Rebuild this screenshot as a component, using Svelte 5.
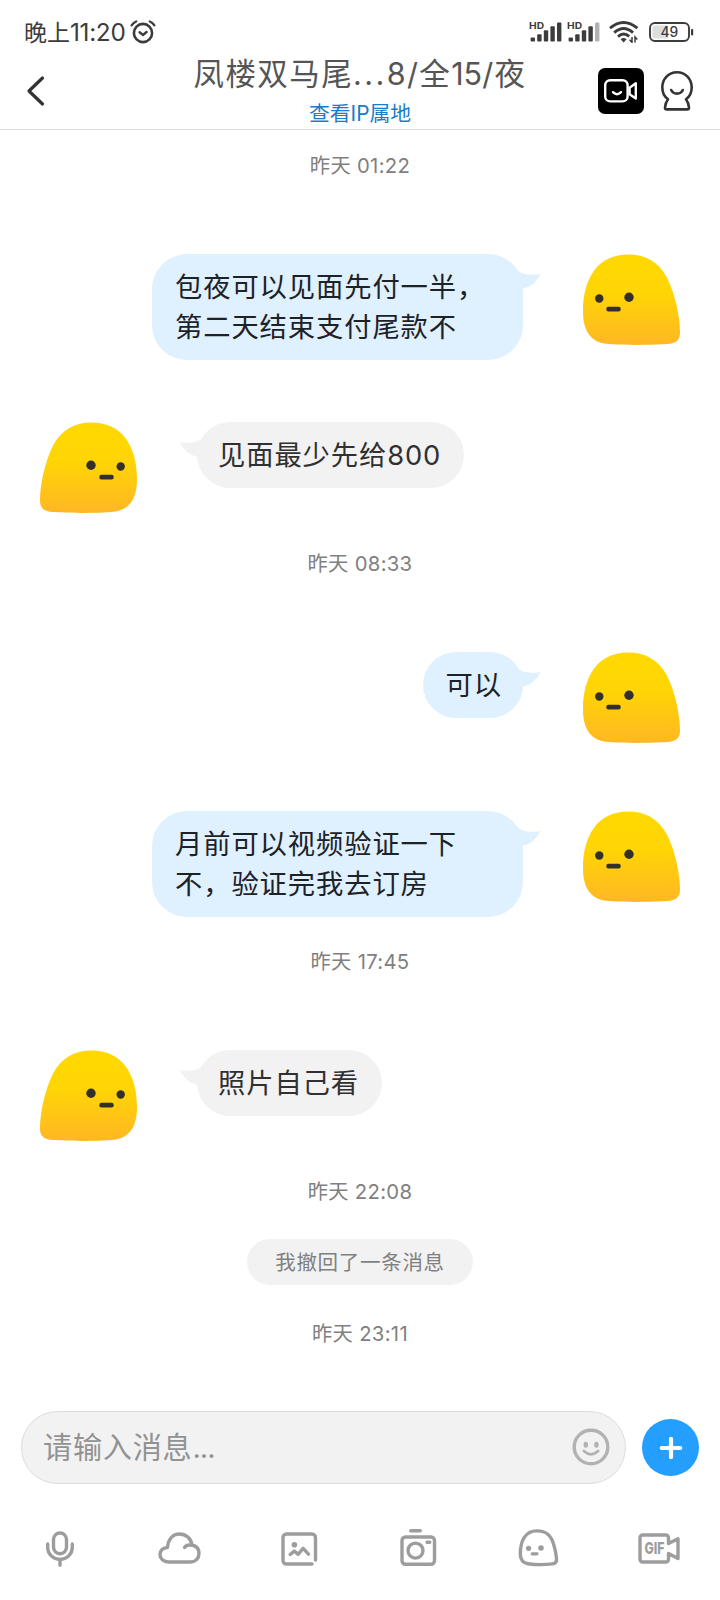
<script>
  const items = [
    { type: 'time', day: '昨天', clock: '01:22' },
    { type: 'message', side: 'mine', lines: ['包夜可以见面先付一半，', '第二天结束支付尾款不'] },
    { type: 'message', side: 'theirs', lines: ['见面最少先给800'] },
    { type: 'time', day: '昨天', clock: '08:33' },
    { type: 'message', side: 'mine', lines: ['可以'] },
    { type: 'message', side: 'mine', lines: ['月前可以视频验证一下', '不，验证完我去订房'] },
    { type: 'time', day: '昨天', clock: '17:45' },
    { type: 'message', side: 'theirs', lines: ['照片自己看'] },
    { type: 'time', day: '昨天', clock: '22:08' },
    { type: 'notice', text: '我撤回了一条消息' },
    { type: 'time', day: '昨天', clock: '23:11' }
  ];
  const bars = [0, 1, 2, 3, 4];
</script>

{#snippet signal(lastDim)}
  <svg class="signal" width="33" height="22" viewBox="0 0 33 22">
    <text x="0" y="7.6" font-size="9.2" font-weight="700" textLength="15" lengthAdjust="spacingAndGlyphs">HD</text>
    {#each bars as b}
      <rect
        x={1.6 + b * 6.6}
        y={[16.4, 13.2, 9.2, 5.2, 1.4][b]}
        width="4.4"
        height={[4, 7.2, 11.2, 15.2, 19][b]}
        rx="1"
        opacity={lastDim && b === 4 ? 0.4 : 1}
      />
    {/each}
  </svg>
{/snippet}

<div class="screen">
  <div class="status">
    <div class="clock">
      <span>晚上<span class="digits">11:20</span></span>
      <svg width="26" height="24" viewBox="0 0 26 24" fill="none" stroke="#3c3c3c" stroke-width="2.6" stroke-linecap="round">
        <circle cx="13" cy="13" r="9.1" />
        <path d="M9.6 12.2 13 15l3.6-3" stroke-width="2.4" />
        <path d="M1.6 5.4Q3.2 2.6 6.2 1.4M24.4 5.4Q22.8 2.6 19.8 1.4" stroke-width="2.2" />
      </svg>
    </div>
    <div class="indicators">
      {@render signal(false)}
      {@render signal(true)}
      <svg class="wifi" width="30" height="22" viewBox="0 0 30 22" fill="none" stroke="#3c3c3c" stroke-width="2.9">
        <path d="M1 7.2Q14.5-4.2 28.4 7.2" />
        <path d="M5.2 11.6Q14.6 3.2 24 11.6" />
        <path d="M9 15.6Q14.6 10.4 20.2 15.4" />
        <path d="M11.6 18.2Q14.6 15.6 17.6 18.2L14.6 21.4Z" fill="#3c3c3c" stroke="none" />
        <path d="M23 16v5.4l-2.4-2.6M26 21.4V16l2.3 2.6" stroke-width="1.5" />
      </svg>
      <svg class="battery" width="45" height="20" viewBox="0 0 45 20">
        <rect x="1" y="1" width="39" height="18" rx="5" fill="#fff" stroke="#3c3c3c" stroke-width="1.9" />
        <path d="M6 3.4h13v13.2H6a2.6 2.6 0 0 1-2.6-2.6V6A2.6 2.6 0 0 1 6 3.4Z" fill="#dedede" />
        <rect x="42" y="7" width="2.2" height="6.4" rx=".8" fill="#3c3c3c" />
        <text x="20.4" y="15" font-size="13.8" font-weight="500" text-anchor="middle">49</text>
      </svg>
    </div>
  </div>

  <header>
    <svg class="back" width="20" height="32" viewBox="0 0 20 32" fill="none" stroke="#333" stroke-width="3.2" stroke-linecap="round" stroke-linejoin="round">
      <path d="M16.500 3 3 16l13.500 13" />
    </svg>
    <div class="heading">
      <h1>凤楼双马尾<span class="dots">...</span>8/全<span class="tight">15</span>/夜</h1>
      <div class="link">查看IP属地</div>
    </div>
    <div class="actions">
      <svg width="46" height="46" viewBox="0 0 46 46" fill="none" stroke="#fff" stroke-width="2.4" stroke-linecap="round" stroke-linejoin="round">
        <rect width="46" height="46" rx="7" fill="#000" stroke="none" />
        <rect x="7.2" y="12.2" width="22.4" height="21.2" rx="5" />
        <path d="M15 24.2q4 4 8 0" />
        <path d="M37.800 15.200v15.400l-6.200-4.400v-6.400Z" />
      </svg>
      <svg width="34" height="42" viewBox="0 0 34 42" fill="none" stroke="#333" stroke-width="2.6" stroke-linecap="round" stroke-linejoin="round">
        <path d="M8 29.300C4 26.500 2.300 22.200 2.300 17.600 2.300 8.700 8.600 2.300 17 2.300s14.700 6.400 14.700 15.300c0 4.600-1.700 8.900-5.700 11.700 1.500 2 2.700 4.800 3 8.200 0 1.300-.6 1.900-1.900 1.900H6.900C5.600 39.400 5 38.800 5 37.500c.3-3.400 1.500-6.200 3-8.200Z" />
        <path d="M11.200 20q1.800 3.600 5.800 3.600t5.800-3.600" />
      </svg>
    </div>
  </header>

  <main>
    {#each items as item}
      {#if item.type === 'time'}
        <div class="time">{item.day} <span>{item.clock}</span></div>
      {:else if item.type === 'notice'}
        <div class="notice">{item.text}</div>
      {:else}
        <div class="message {item.side}">
          <svg class="avatar" width="97" height="92" viewBox="0 -.5 97 92">
            <defs>
              <linearGradient id="body-fill" x1="0" y1="0" x2="0" y2="1">
                <stop offset="0" stop-color="#ffd900" />
                <stop offset=".42" stop-color="#ffd505" />
                <stop offset="1" stop-color="#ffb724" />
              </linearGradient>
            </defs>
            <path fill="url(#body-fill)" d="M45 0C62 0 75.500 7 84 23 92.500 40 97 63 97 78c0 7.500-4 11-13 11.600-15 1.100-47 1.100-61-.4C6 87.200 0 74 0 57 0 25 14 0 45 0Z" />
            <g fill="#33302a">
              <circle cx="16.300" cy="44" r="4.200" />
              <circle cx="46" cy="42.700" r="4.700" />
              <rect x="23.300" y="52.300" width="14.400" height="4.700" rx="2" />
            </g>
          </svg>
          <div class="bubble" class:long={item.lines.length > 1}>
            {#each item.lines as line}
              <div>{line}</div>
            {/each}
            <svg class="tail" width="30" height="24" viewBox="0 0 30 24">
              <path d="M0 0 5.200 1.600Q14 9 29.500 6 24 18 12.300 20.500L0 20Z" />
            </svg>
          </div>
        </div>
      {/if}
    {/each}
  </main>

  <div class="composer">
    <div class="field">
      <span>请输入消息<span class="ellipsis">...</span></span>
      <svg width="38" height="38" viewBox="0 0 38 38" fill="none" stroke="#b2b2b2" stroke-width="3.400" stroke-linecap="round">
        <circle cx="19" cy="19" r="16.800" />
        <path d="M11.800 23q7.200 6.600 14.400 0" stroke-width="2.600" />
        <path d="M13.800 16v1.600M24.400 16v1.600" stroke-width="4.400" />
      </svg>
    </div>
    <div class="add">
      <svg width="24" height="24" viewBox="0 0 24 24" stroke="#fff" stroke-width="4.200" stroke-linecap="round">
        <path d="M12 2.800v18.400M2.800 12h18.400" />
      </svg>
    </div>
  </div>

  <nav>
    <svg viewBox="0 0 44 44">
      <rect x="15.500" y="5" width="13" height="20.800" rx="6.500" />
      <path d="M9.700 16v3.200a12.300 12.300 0 0 0 24.600 0V16M22 32v5.300" />
    </svg>
    <svg viewBox="1 0 44 44">
      <path d="M10.500 19.500C11 11.500 15.500 6 22.500 6c6.500 0 11.500 4.500 12.500 11 4.500 1 7 4.500 7 8.500 0 5-3.700 8.500-8.500 8.500H11.500c-5 0-8.500-3.500-8.500-7.500 0-3.800 3-7 7.500-7Z" />
      <path d="M35 17.300c-3.200-.6-6 0-7.500 2.100" />
    </svg>
    <svg viewBox="0 0 44 44">
      <path d="M34 36H8.500A3.500 3.500 0 0 1 5 32.500v-23A3.500 3.500 0 0 1 8.500 6H34a3.500 3.500 0 0 1 3.500 3.500V32" />
      <path d="m12.200 26.500 4.100-3.400 4 3.200 4.800-6 5.400 5.800" />
      <circle cx="16.400" cy="16.700" r="2.800" fill="#9d9d9d" stroke="none" />
    </svg>
    <svg viewBox="0 0 44 44">
      <rect x="5" y="9" width="32.500" height="27.200" rx="3.500" />
      <circle cx="18.500" cy="22.600" r="7.500" />
      <path d="M13.700 2.800h9.600M30 14.200h2.800" />
    </svg>
    <svg viewBox="0 0 44 44">
      <path d="M20 2.900c9.500 0 13.800 4.500 16.300 12.300 2 6.500 3.200 12.500 3.200 16.800 0 2.500-1.500 3.600-4 3.900-7 .8-17.500.8-24.500-.2C5.500 34.800 3.300 31 3.300 26 3.300 13 8 2.900 20 2.900Z" />
      <g fill="#9d9d9d" stroke="none">
        <circle cx="11.600" cy="20.300" r="2.600" />
        <circle cx="24" cy="20" r="2.800" />
        <rect x="13.700" y="24.200" width="7.800" height="3.200" rx="1.400" />
      </g>
    </svg>
    <svg viewBox="0 0 44 44">
      <path d="M31.500 15.500V9.700A2.700 2.700 0 0 0 28.800 7H5.700A2.700 2.700 0 0 0 3 9.700v21.600A2.700 2.700 0 0 0 5.700 34h23.100a2.700 2.700 0 0 0 2.700-2.700V25.500l9.500 5V10.800Z" />
      <text x="7.500" y="26.200" font-size="16" font-weight="800" textLength="20" lengthAdjust="spacingAndGlyphs">GIF</text>
    </svg>
  </nav>
</div>

<style>
  :global(body) {
    background: #fff;
  }
  .screen {
    width: 720px;
    height: 1600px;
    box-sizing: border-box;
    overflow: hidden;
    display: flex;
    flex-direction: column;
    background: #fff;
    color: #222;
    font-family: Inter, "Noto Sans CJK SC", sans-serif;
  }
  .screen svg {
    display: block;
    flex: none;
  }
  .status {
    height: 56px;
    flex: none;
    box-sizing: border-box;
    padding: 8px 26px 0 24px;
    display: flex;
    justify-content: space-between;
    align-items: center;
    color: #3c3c3c;
  }
  .clock {
    display: flex;
    align-items: center;
    gap: 5px;
    font-size: 23px;
    line-height: 30px;
    font-weight: 400;
    white-space: nowrap;
  }
  .digits {
    font-size: 24.3px;
    letter-spacing: -0.3px;
  }
  .indicators {
    display: flex;
    align-items: center;
    gap: 5px;
    fill: #3c3c3c;
  }
  .wifi {
    margin-left: 4px;
  }
  .battery {
    margin-left: 5px;
  }
  header {
    height: 74px;
    flex: none;
    box-sizing: border-box;
    border-bottom: 1px solid #dfdfdf;
    padding: 0 26px;
    display: grid;
    grid-template-columns: 96px 1fr 96px;
    align-items: start;
  }
  .back {
    margin-top: 19px;
  }
  .heading {
    text-align: center;
    white-space: nowrap;
  }
  h1 {
    margin: 0;
    height: 41px;
    line-height: 36px;
    font-size: 30.5px;
    font-weight: 400;
    letter-spacing: 1.4px;
    color: #555;
  }
  .dots {
    letter-spacing: 2.4px;
  }
  .tight {
    letter-spacing: 0;
  }
  .link {
    font-size: 20.8px;
    line-height: 33px;
    color: #187cc9;
  }
  .actions {
    display: flex;
    justify-content: flex-end;
    align-items: center;
    gap: 16px;
    margin-top: 12px;
  }
  main {
    flex: 1;
    display: flex;
    flex-direction: column;
    padding-top: 20px;
  }
  .time {
    height: 30px;
    line-height: 31px;
    text-align: center;
    font-size: 20.3px;
    letter-spacing: 0.3px;
    color: #808080;
  }
  .message {
    display: flex;
    min-height: 97px;
    align-items: flex-start;
    padding: 0 40px;
  }
  .mine {
    flex-direction: row-reverse;
  }
  .time + .message {
    margin-top: 74px;
  }
  .message + .message {
    margin-top: 62px;
  }
  .message + .time {
    margin-top: 29px;
  }
  .theirs .avatar {
    transform: scaleX(-1);
  }
  .bubble {
    position: relative;
    box-sizing: border-box;
    padding: 14px 21px 12px 23px;
    border-radius: 35px;
    font-size: 27.3px;
    line-height: 40px;
    letter-spacing: 0.9px;
    white-space: nowrap;
  }
  .bubble.long {
    width: 371px;
  }
  .mine .bubble {
    margin-right: 60px;
    background: #dff0ff;
    fill: #dff0ff;
    color: #1d2226;
  }
  .theirs .bubble {
    margin-left: 60px;
    padding-left: 21px;
    padding-right: 23px;
    background: #f2f2f2;
    fill: #f2f2f2;
    color: #303030;
  }
  .tail {
    position: absolute;
    top: 14px;
    right: -18px;
  }
  .theirs .tail {
    right: auto;
    left: -18px;
    transform: scaleX(-1);
  }
  .notice {
    align-self: center;
    margin: 33px 0;
    padding: 0 28px;
    height: 46px;
    line-height: 47px;
    border-radius: 23px;
    background: #f2f2f2;
    color: #808080;
    font-size: 20.5px;
    letter-spacing: 0.7px;
  }
  .composer {
    flex: none;
    display: flex;
    align-items: center;
    gap: 16px;
    padding: 0 21px;
    height: 73px;
  }
  .field {
    flex: 1;
    height: 73px;
    box-sizing: border-box;
    display: flex;
    justify-content: space-between;
    align-items: center;
    padding: 0 15px 1px 21px;
    border: 1px solid #dcdcdc;
    border-radius: 37px;
    background: #f2f2f2;
    color: #929292;
    font-size: 29.2px;
    line-height: 40px;
    letter-spacing: 0.7px;
  }
  .field > span {
    margin-top: 2px;
  }
  .ellipsis {
    letter-spacing: -1px;
  }
  .add {
    width: 57px;
    height: 57px;
    border-radius: 50%;
    background: #259fff;
    display: grid;
    place-items: center;
  }
  nav {
    flex: none;
    height: 116px;
    box-sizing: border-box;
    padding: 44px 39px 0 38px;
    display: flex;
    justify-content: space-between;
  }
  nav svg {
    width: 44px;
    height: 44px;
    fill: none;
    stroke: #9d9d9d;
    stroke-width: 3.4;
    stroke-linecap: round;
    stroke-linejoin: round;
  }
  nav text {
    fill: #9d9d9d;
    stroke: none;
  }
</style>
